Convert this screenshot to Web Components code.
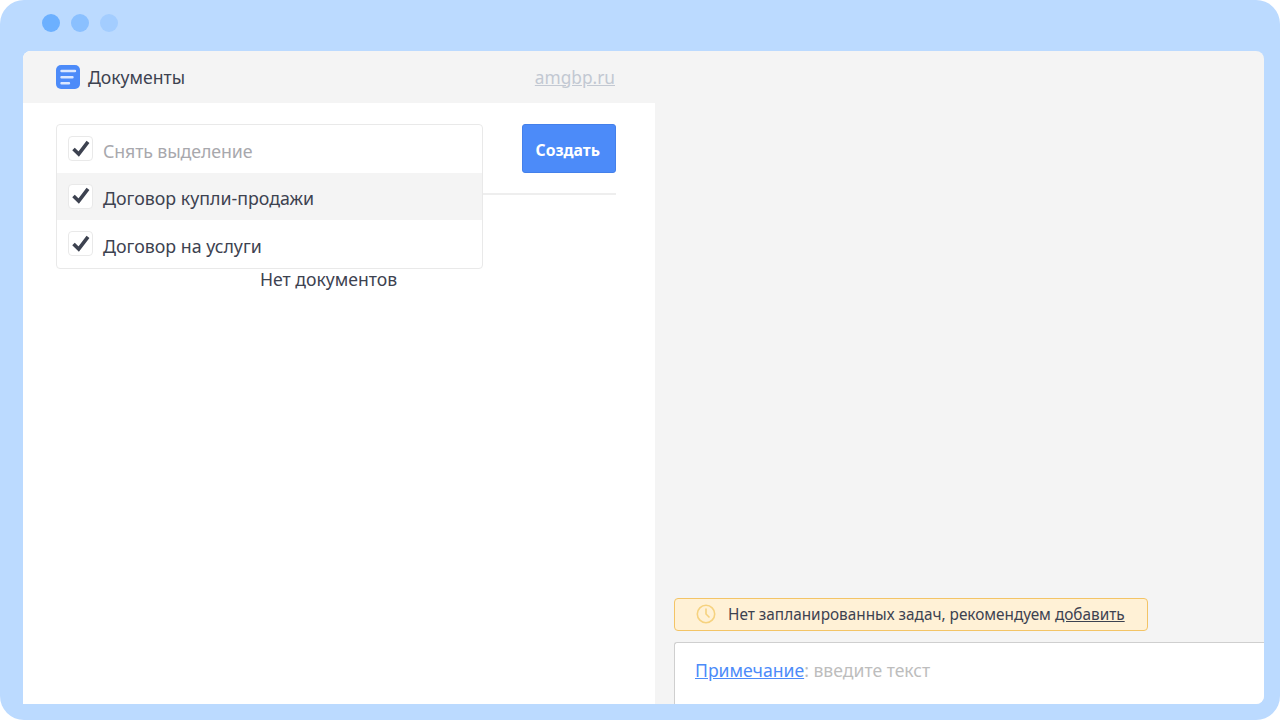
<!DOCTYPE html>
<html lang="ru">
<head>
<meta charset="utf-8">
<title>Документы</title>
<style>
  html, body { margin: 0; height: 100%; background: #fff; }
  body { font-family: "Noto Sans", "Open Sans", sans-serif; color: #3d4250; }
</style>
</head>
<body>
<app-frame>
  <docs-panel slot="left">
    <check-menu>
      <check-item muted>Снять выделение</check-item>
      <check-item active>Договор купли-продажи</check-item>
      <check-item>Договор на услуги</check-item>
    </check-menu>
  </docs-panel>
  <notes-panel slot="right"></notes-panel>
</app-frame>

<script>
class AppFrame extends HTMLElement {
  constructor() {
    super();
    this.attachShadow({ mode: 'open' });
    this.shadowRoot.innerHTML = `
      <style>
        :host {
          display: flex;
          flex-direction: column;
          box-sizing: border-box;
          width: 1280px;
          height: 720px;
          background: #bbdaff;
          border-radius: 24px;
          padding: 0 16px 16px 23px;
          overflow: hidden;
        }
        .bar {
          display: flex;
          align-items: center;
          gap: 11px;
          height: 51px;
          padding: 0 0 5px 19px;
          box-sizing: border-box;
        }
        .dot { width: 18px; height: 18px; border-radius: 50%; }
        .window {
          flex: 1;
          min-height: 0;
          display: grid;
          grid-template-columns: 632px 1fr;
          background: #f4f4f4;
          border-radius: 8px 8px 8px 0;
          overflow: hidden;
        }
      </style>
      <div class="bar">
        <span class="dot" style="background:#6cb0ff"></span>
        <span class="dot" style="background:#8ac0ff"></span>
        <span class="dot" style="background:#a3cdff"></span>
      </div>
      <div class="window">
        <slot name="left"></slot>
        <slot name="right"></slot>
      </div>
    `;
  }
}

class DocsPanel extends HTMLElement {
  constructor() {
    super();
    this.attachShadow({ mode: 'open' });
    this.shadowRoot.innerHTML = `
      <style>
        :host { display: flex; flex-direction: column; background: #fff; position: relative; }
        header {
          display: flex;
          align-items: center;
          justify-content: space-between;
          height: 52px;
          padding: 0 40px 0 33px;
          background: #f4f4f4;
        }
        .title { display: flex; align-items: center; gap: 8px; font-size: 17.6px; color: #3d4250; }
        svg { display: block; }
        a { font-size: 17.3px; color: #c2c8d2; text-decoration: underline; }
        .toolbar {
          display: flex;
          justify-content: flex-end;
          margin: 21px 39.5px 0 33px;
          padding-bottom: 20px;
          border-bottom: 2px solid #eeeeee;
        }
        button {
          width: 93.5px;
          height: 49px;
          padding: 2px 2px 0 0;
          border: 1px solid #4480ea;
          border-radius: 3px;
          background: #4c8bf9;
          color: #fff;
          font: 700 15.7px "Noto Sans", sans-serif;
        }
        .empty { text-align: center; font-size: 17.6px; margin-top: 72px; padding-right: 21px; color: #3d4250; }
        ::slotted(check-menu) { position: absolute; left: 33px; top: 73px; }
      </style>
      <header>
        <div class="title">
          <svg width="24" height="24" viewBox="0 0 24 24">
            <rect width="24" height="24" rx="5" fill="#4c8bf9"/>
            <path d="M5.5 6h13.5M5.5 12.2h11M5.5 18.2h7.5" stroke="#dbe8ff" stroke-width="2.4" stroke-linecap="round" fill="none"/>
          </svg>
          <span>Документы</span>
        </div>
        <a href="#">amgbp.ru</a>
      </header>
      <div class="toolbar"><button>Создать</button></div>
      <div class="empty">Нет документов</div>
      <slot></slot>
    `;
  }
}

class CheckMenu extends HTMLElement {
  constructor() {
    super();
    this.attachShadow({ mode: 'open' });
    this.shadowRoot.innerHTML = `
      <style>
        :host {
          display: block;
          box-sizing: border-box;
          width: 427px;
          height: 145px;
          background: #fff;
          border: 1px solid #e9e9e9;
          border-radius: 4px;
          overflow: hidden;
        }
      </style>
      <slot></slot>
    `;
  }
}

class CheckItem extends HTMLElement {
  constructor() {
    super();
    this.attachShadow({ mode: 'open' });
    this.shadowRoot.innerHTML = `
      <style>
        :host {
          display: flex;
          align-items: center;
          gap: 10px;
          height: 47.5px;
          padding-left: 11px;
          font-size: 17.8px;
          color: #3d4250;
        }
        :host([active]) { background: #f4f4f4; }
        :host([muted]) { color: #a8a8ad; letter-spacing: -0.13px; }
        .box {
          display: flex;
          align-items: center;
          justify-content: center;
          box-sizing: border-box;
          width: 25px;
          height: 25px;
          background: #fff;
          border: 1px solid #e9e9e9;
          border-radius: 4px;
        }
        .label { padding-top: 4px; }
        svg { display: block; margin-top: -1px; }
      </style>
      <span class="box">
        <svg width="18" height="17" viewBox="0 0 18 17">
          <path d="M1.5 9 6.7 14 16 1.8" stroke="#3d4250" stroke-width="3.6" fill="none"/>
        </svg>
      </span>
      <span class="label"><slot></slot></span>
    `;
  }
}

class NotesPanel extends HTMLElement {
  constructor() {
    super();
    this.attachShadow({ mode: 'open' });
    this.shadowRoot.innerHTML = `
      <style>
        :host {
          display: flex;
          flex-direction: column;
          justify-content: flex-end;
          padding-left: 19px;
          min-width: 0;
        }
        .alert {
          display: flex;
          align-items: center;
          box-sizing: border-box;
          width: 474px;
          height: 33px;
          margin-bottom: 11px;
          padding: 0 0 1px 21px;
          gap: 12px;
          background: #fff1d6;
          border: 1px solid #f3c466;
          border-radius: 4px;
          font-size: 15.35px;
          color: #3d4250;
        }
        .alert a { color: #3d4250; }
        .note {
          box-sizing: border-box;
          height: 62px;
          padding: 15px 0 0 20px;
          background: #fff;
          border-top: 1px solid #cfcfcf;
          border-left: 1px solid #cfcfcf;
          border-top-left-radius: 3px;
          font-size: 17.6px;
          color: #bdbdbd;
        }
        .note a { color: #4c8bf9; }
        svg { display: block; flex: none; }
      </style>
      <div class="alert">
        <svg width="20" height="20" viewBox="0 0 20 20" fill="none" stroke="#f6d27f" stroke-width="1.6">
          <circle cx="10" cy="10" r="8.7"/>
          <path d="M10 4.5V10l3.5 3.5"/>
        </svg>
        <span>Нет запланированных задач, рекомендуем <a href="#">добавить</a></span>
      </div>
      <div class="note"><a href="#">Примечание</a>: введите текст</div>
    `;
  }
}

customElements.define('app-frame', AppFrame);
customElements.define('docs-panel', DocsPanel);
customElements.define('check-menu', CheckMenu);
customElements.define('check-item', CheckItem);
customElements.define('notes-panel', NotesPanel);
</script>
</body>
</html>
